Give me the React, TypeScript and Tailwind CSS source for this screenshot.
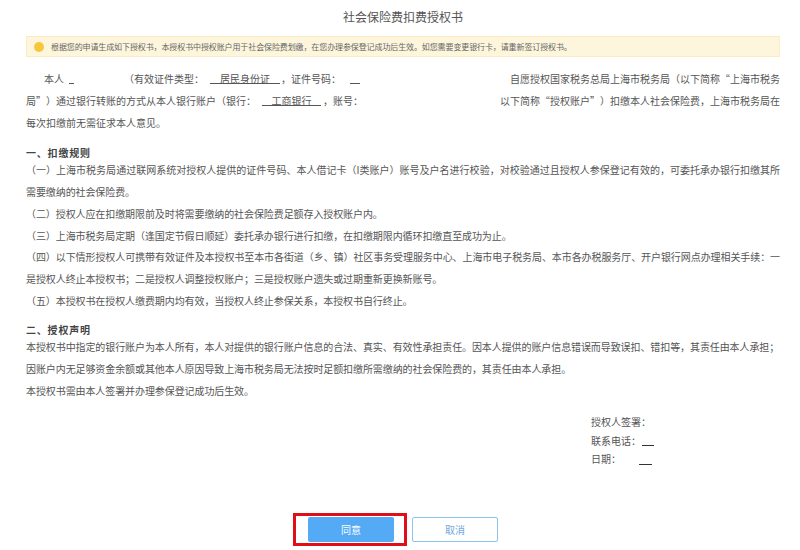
export default function App() {
  const font = { fontFamily: '"Noto Sans CJK SC", "Liberation Sans", sans-serif' };
  return (
    <div style={font} className="w-[800px] h-[550px] bg-white overflow-hidden text-[10px] text-[#555555] [text-spacing-trim:space-all]">
      <div className="pt-[9px] px-[26px]">
        <h1 className="text-center text-[12px] leading-[16px] font-normal text-[#555555] w-[754px]">社会保险费扣费授权书</h1>
        <div className="mt-[11px] h-[21px] w-[754px] flex items-center gap-[7px] pl-[7px] bg-[#fdf6dc] border border-[#faecc0] text-[8px] text-[#666666]">
          <span className="w-[10px] h-[10px] rounded-full bg-[#f5c83c] shrink-0" />
          <span className="whitespace-nowrap tracking-[-0.11px]">根据您的申请生成如下授权书，本授权书中授权账户用于社会保险费划缴，在您办理参保登记成功后生效。如您需要变更银行卡，请重新签订授权书。</span>
        </div>
        <div className="mt-[11px] w-[754px] leading-[22px]">
          <div className="flex justify-between">
            <div className="flex pl-[18px]">
              <span>本人</span>
              <span className="ml-[5px] w-[5px] h-[16px] border-b border-[#555555]" />
              <span className="ml-[50px]">（有效证件类型：</span>
              <span className="ml-[6px] w-[70px] h-[16px] text-center leading-[22px] border-b border-[#555555] -mr-px">居民身份证</span>
              <span className="ml-[2px]">，证件号码：</span>
              <span className="ml-[9px] w-[10px] h-[16px] border-b border-[#555555]" />
            </div>
            <span>自愿授权国家税务总局上海市税务局（以下简称“上海市税务</span>
          </div>
          <div className="flex justify-between">
            <div className="flex">
              <span>局”）通过银行转账的方式从本人银行账户（银行：</span>
              <span className="ml-[6px] w-[59px] h-[16px] text-center leading-[22px] border-b border-[#555555]">工商银行</span>
              <span className="ml-[2px]">，账号：</span>
            </div>
            <span>以下简称“授权账户”）扣缴本人社会保险费，上海市税务局在</span>
          </div>
          <p>每次扣缴前无需征求本人意见。</p>
        </div>
        <h2 className="mt-[12px] h-[14px] leading-[14px] font-bold text-[#444444] tracking-[0.8px]">一、扣缴规则</h2>
        <div className="mt-[-1px] w-[754px] leading-[21.85px] text-justify tracking-[-0.09px]">
          <p>（一）上海市税务局通过联网系统对授权人提供的证件号码、本人借记卡（I类账户）账号及户名进行校验，对校验通过且授权人参保登记有效的，可委托承办银行扣缴其所需要缴纳的社会保险费。</p>
          <p>（二）授权人应在扣缴期限前及时将需要缴纳的社会保险费足额存入授权账户内。</p>
          <p>（三）上海市税务局定期（逢国定节假日顺延）委托承办银行进行扣缴，在扣缴期限内循环扣缴直至成功为止。</p>
          <p>（四）以下情形授权人可携带有效证件及本授权书至本市各街道（乡、镇）社区事务受理服务中心、上海市电子税务局、本市各办税服务厅、开户银行网点办理相关手续：一是授权人终止本授权书；二是授权人调整授权账户；三是授权账户遗失或过期重新更换新账号。</p>
          <p>（五）本授权书在授权人缴费期内均有效，当授权人终止参保关系，本授权书自行终止。</p>
        </div>
        <h2 className="mt-[11px] h-[14px] leading-[14px] font-bold text-[#444444] tracking-[0.8px]">二、授权声明</h2>
        <div className="mt-[-1px] w-[754px] leading-[21.85px] text-justify tracking-[-0.09px]">
          <p>本授权书中指定的银行账户为本人所有，本人对提供的银行账户信息的合法、真实、有效性承担责任。因本人提供的账户信息错误而导致误扣、错扣等，其责任由本人承担；</p>
          <p>因账户内无足够资金余额或其他本人原因导致上海市税务局无法按时足额扣缴所需缴纳的社会保险费的，其责任由本人承担。</p>
          <p>本授权书需由本人签署并办理参保登记成功后生效。</p>
        </div>
        <div className="mt-[12px] ml-[565px] leading-[18.5px] w-[80px]">
          <p>授权人签署：</p>
          <div className="flex">
            <span>联系电话：</span>
            <span className="ml-[1px] w-[12px] h-[14px] border-b border-[#333333]" />
          </div>
          <div className="flex">
            <span>日期：</span>
            <span className="ml-[18px] w-[13px] h-[15px] border-b border-[#333333]" />
          </div>
        </div>
        <div className="mt-[44px] flex items-center ml-[267px]">
          <div className="w-[114px] h-[33px] border-[3px] border-[#e00f17] flex items-center pl-[12px]">
            <button className="w-[86px] h-[25px] rounded-[2px] bg-[#55aaf5] text-white text-[10px]">同意</button>
          </div>
          <button className="ml-[5px] w-[86px] h-[25px] rounded-[2px] border border-[#8cc4ec] bg-white text-[#6fa8dc] text-[10px]">取消</button>
        </div>
      </div>
    </div>
  );
}
